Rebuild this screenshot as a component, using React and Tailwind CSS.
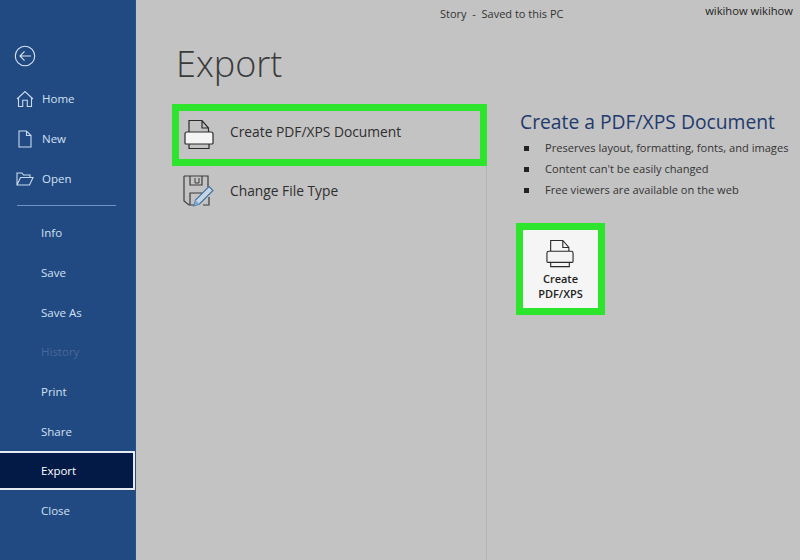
import React from 'react';

const FONT = "font-['Open_Sans','Noto_Sans',sans-serif]";

const BackIcon = () => (
    <svg width="22" height="22" viewBox="0 0 24 24" fill="none" stroke="#dbe6f5" strokeWidth="1.2">
        <circle cx="12" cy="12" r="10.6" />
        <path d="M18.5 12H6.5M11.5 7L6.5 12l5 5" />
    </svg>
);

const HomeIcon = () => (
    <svg width="18" height="18" viewBox="0 0 18 18" fill="none" stroke="#c9d9ef" strokeWidth="1.1">
        <path d="M1 9L9 1.5 17 9M2.5 7.8v8.7h4.2v-6.2h4.6v6.2h4.2V7.8" />
    </svg>
);

const NewIcon = () => (
    <svg width="14" height="18" viewBox="0 0 14 18" fill="none" stroke="#c9d9ef" strokeWidth="1.1">
        <path d="M1 1h7.5L13 5.5V17H1zM8.5 1v4.5H13" />
    </svg>
);

const OpenIcon = () => (
    <svg width="18" height="14" viewBox="0 0 18 14" fill="none" stroke="#c9d9ef" strokeWidth="1.1">
        <path d="M1 13V1h5l1.5 2H14v2.5M1 13h12.5L17 5.5H4.5L1 13z" />
    </svg>
);

const PrinterDocIcon = ({ className }) => (
    <svg className={className} width="30" height="32" viewBox="0 0 30 32" fill="none" stroke="#2b2b2b" strokeWidth="1.2">
        <path d="M5 13V1.5h13L24.5 9v4M18 1.5V9h6.5" />
        <path d="M3 13h24a2 2 0 0 1 2 2v9a1 1 0 0 1-1 1H2a1 1 0 0 1-1-1v-9a2 2 0 0 1 2-2z" fill="#f4f4f4" />
        <path d="M5 25v4.5h20V25" />
    </svg>
);

const ChangeTypeIcon = () => (
    <svg width="32" height="32" viewBox="0 0 32 32" fill="none">
        <path d="M1 1h24v11M1 1v25l5 4h6" stroke="#3c3c3c" strokeWidth="1.2" />
        <path d="M7 1v9h12V1M7 30V18h12" stroke="#3c3c3c" strokeWidth="1.2" />
        <path d="M20 30h6V22" stroke="#3c3c3c" strokeWidth="1.2" />
        <path d="M12 3v5h4V3" stroke="#3c3c3c" strokeWidth="1" />
        <path d="M11 31l1.5-6L26 11.5l4 4L16.5 29z" fill="#c7d6e4" stroke="#3f6f9f" strokeWidth="1.1" />
        <path d="M11 31l1.5-6 4 4z" fill="#7fa7cf" />
    </svg>
);

const lowerItems = ['Info', 'Save', 'Save As', 'History', 'Print', 'Share'];

const App = () => {
    return (
        <div className={`${FONT} flex h-[560px] w-[800px] overflow-hidden bg-[#c3c3c3] text-[#2f2f2f]`}>
            {/* file menu sidebar */}
            <aside className="flex w-[136px] shrink-0 flex-col border-r border-[#2d4f84] bg-[#214a82] text-[11.5px] text-[#d3e0f2]">
                <div className="pl-[14px] pt-[45px]">
                    <BackIcon />
                </div>
                <div className="mt-[12px] flex h-[40px] items-center">
                    <span className="flex w-[41px] justify-center pl-[9px]"><HomeIcon /></span>
                    <span className="pl-[1px]">Home</span>
                </div>
                <div className="flex h-[40px] items-center">
                    <span className="flex w-[41px] justify-center pl-[9px]"><NewIcon /></span>
                    <span className="pl-[1px]">New</span>
                </div>
                <div className="flex h-[39px] items-center">
                    <span className="flex w-[41px] justify-center pl-[9px]"><OpenIcon /></span>
                    <span className="pl-[1px]">Open</span>
                </div>
                <div className="ml-[17px] mt-[7px] h-[1px] w-[99px] bg-[#6f93c4]" />
                <div className="mt-[7px] flex flex-col">
                    {lowerItems.map((item) => (
                        <div
                            key={item}
                            className={`flex h-[39.7px] items-center pl-[41px] ${item === 'History' ? 'text-[#47689a]' : ''}`}
                        >
                            {item}
                        </div>
                    ))}
                </div>
                <div className="flex h-[39px] items-center border-2 border-l-0 border-[#e6ebf3] bg-[#031a47] pl-[41px] text-white">
                    Export
                </div>
                <div className="flex h-[41px] items-center pl-[41px]">Close</div>
            </aside>

            <main className="flex min-w-0 flex-1 flex-col">
                <header className="flex h-[24px] items-start text-[11px] text-[#333]">
                    <span className="ml-[304px] mt-[6px] whitespace-pre">Story  -  Saved to this PC</span>
                    <span className="ml-auto mr-[7px] mt-[3px] text-[11.2px] text-[#222]">wikihow wikihow</span>
                </header>
                <h1 className="ml-[40px] mt-[15px] text-[36px] font-light leading-[50px] text-[#3a3a3a]">Export</h1>

                <div className="mt-[15px] flex flex-1">
                    {/* export options column */}
                    <div className="ml-[36px] w-[315px] shrink-0 border-r border-[#b2b2b2]">
                        <div className="-mr-px flex h-[62px] items-center border-[7px] border-[#2ee52e] pl-[5px] text-[13.8px]">
                            <PrinterDocIcon />
                            <span className="mb-[5px] ml-[16px]">Create PDF/XPS Document</span>
                        </div>
                        <div className="mt-[7px] flex h-[36px] items-center pl-[11px] text-[13.8px]">
                            <ChangeTypeIcon />
                            <span className="ml-[15px]">Change File Type</span>
                        </div>
                    </div>

                    {/* description column */}
                    <div className="ml-[33px] flex-1">
                        <h2 className="mt-[5px] text-[19.3px] leading-[26px] text-[#1f3a6e]">Create a PDF/XPS Document</h2>
                        <ul className="mt-[3px] flex flex-col text-[11.1px] text-[#333]">
                            <li className="flex h-[21px] items-center">
                                <span className="ml-[4px] h-[5px] w-[5px] bg-[#222]" />
                                <span className="ml-[16px] whitespace-nowrap">Preserves layout, formatting, fonts, and images</span>
                            </li>
                            <li className="flex h-[21px] items-center">
                                <span className="ml-[4px] h-[5px] w-[5px] bg-[#222]" />
                                <span className="ml-[16px]">Content can't be easily changed</span>
                            </li>
                            <li className="flex h-[21px] items-center">
                                <span className="ml-[4px] h-[5px] w-[5px] bg-[#222]" />
                                <span className="ml-[16px]">Free viewers are available on the web</span>
                            </li>
                        </ul>
                        <div className="-ml-[4px] mt-[22px] flex h-[92px] w-[89px] flex-col items-center border-[7px] border-[#2ee52e] bg-[#f5f5f5] pt-[9px] text-center text-[11px] font-semibold leading-[15px] text-[#222]">
                            <PrinterDocIcon className="mr-[1px] h-[30px] w-[28px]" />
                            <span className="mt-[2px]">Create<br />PDF/XPS</span>
                        </div>
                    </div>
                </div>
            </main>
        </div>
    );
};

export default App;
